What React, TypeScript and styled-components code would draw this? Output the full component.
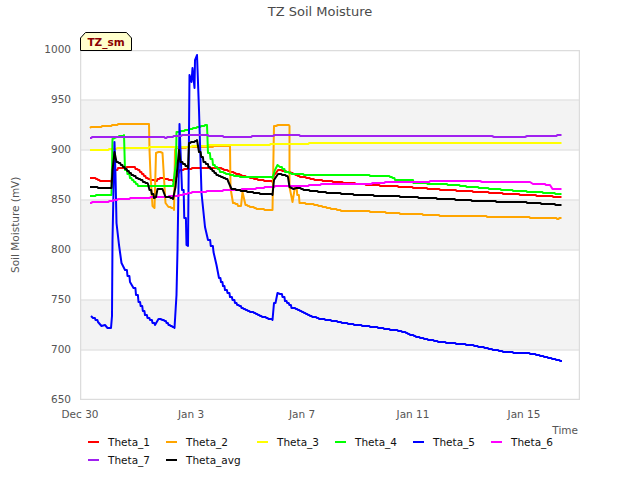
import React from "react";
import styled, { createGlobalStyle } from "styled-components";

type Pt = [number, number];

interface iSeries {
  name: string;
  color: string;
  points: Pt[];
}

// points are page pixels, the plot's viewBox starts at 80,50
const red: iSeries = {
  name: "Theta_1",
  color: "#ff0000",
  points: [
    [90, 177.5], [94, 178], [100, 181], [111.5, 181.5], [112.5, 172], [118, 168], [133, 167], [138, 170], [146, 178],
    [155, 181], [160, 177.5], [173, 181], [176, 178], [180, 170], [190, 168.5], [218, 167.5], [230, 171.5], [240, 175],
    [250, 177.5], [260, 180], [272.5, 181.5], [274, 175], [278, 170], [286.5, 171.5], [300, 176.5], [316.5, 180],
    [343, 182.5], [370, 185], [390, 186], [413, 187.5], [440, 189.5], [473, 191.5], [503, 193.5], [536.5, 195.5],
    [561.5, 197],
  ],
};

const orange: iSeries = {
  name: "Theta_2",
  color: "#ffa500",
  points: [
    [90, 128], [91, 127], [100, 126.5], [110, 125.5], [120, 124], [149, 124], [149.5, 150], [150.5, 175], [152.5, 206],
    [154.5, 208], [156, 153], [158.5, 151.5], [162.5, 152.5], [165.5, 203], [168.5, 207], [174, 209.5], [175, 150],
    [176, 148], [195, 147], [230, 146], [230.5, 188], [233, 203], [238, 205.5], [241, 205.5], [242.5, 192], [245.5, 205],
    [256.5, 209], [272.5, 210], [274, 126], [278, 125], [289.5, 125.5], [289.5, 187], [292.5, 202], [295, 187],
    [299.5, 203], [310, 204], [333, 209], [343, 211], [370, 211.5], [400, 213.5], [423, 214.5], [448, 216], [487, 216.5],
    [530, 217.5], [557, 218.5], [561.5, 217.5],
  ],
};

const yellow: iSeries = {
  name: "Theta_3",
  color: "#ffff00",
  points: [
    [90, 150], [105, 150], [115, 148.5], [147, 147.5], [190, 146.5], [217, 145], [250, 145], [307, 143.5], [370, 142.5],
    [561.5, 142.5],
  ],
};

const green: iSeries = {
  name: "Theta_4",
  color: "#00ff00",
  points: [
    [90, 196], [100, 195], [111.5, 194.5], [112.5, 138.5], [116.5, 137], [124, 135], [125, 170], [130, 178], [138, 185.5],
    [173, 186], [176, 163], [176.5, 132], [187, 129.5], [207, 125], [208, 153], [213, 165], [220, 171.5], [230, 175],
    [240, 176.5], [250, 177], [272.5, 177.5], [275, 170], [277.5, 165], [280, 166.5], [285, 171.5], [291.5, 173.5],
    [308, 175], [370, 175.5], [390, 176.5], [395, 180], [413, 180], [413.5, 183], [441.5, 184], [460, 185.5], [466.5, 186.5],
    [493, 189], [513, 190.5], [527, 191.5], [543, 192.5], [561.5, 194],
  ],
};

const blue: iSeries = {
  name: "Theta_5",
  color: "#0000ff",
  points: [
    [91, 316], [93, 318], [98, 322], [101.5, 326], [105, 325], [107.5, 327.5], [111, 328], [112, 316], [112.5, 240],
    [114.5, 142], [115.5, 175], [116.5, 223], [119, 245], [121.5, 263], [125, 270], [130, 281.5], [133.5, 288],
    [138.5, 301.5], [145, 315], [150, 320], [155, 325], [158.5, 319], [162.5, 319.5], [168.5, 325], [174.5, 327.5],
    [176.5, 295], [177.5, 250], [179.5, 124], [182, 190], [186.5, 245], [188, 246], [189.5, 75], [191.5, 82], [192.5, 68],
    [194.5, 88], [195, 60], [197, 55], [199, 110], [201.5, 193], [205, 226.5], [208, 240], [213.5, 251.5], [216.5, 265],
    [219, 278], [225, 290], [230, 296.5], [235, 303], [241.5, 308], [250, 311.5], [260, 316], [272.5, 320], [274, 303],
    [275.5, 302.5], [277.5, 292.5], [280, 293.5], [285, 300.5], [291.5, 307.5], [300, 310.5], [310, 316], [319, 318.5],
    [350, 324], [380, 328], [400, 331], [420, 338], [440, 342], [470, 345], [505, 352], [530, 353.5], [550, 358], [562, 361],
  ],
};

const magenta: iSeries = {
  name: "Theta_6",
  color: "#ff00ff",
  points: [
    [90, 202.5], [107, 201.5], [120, 199], [177, 196], [190, 192.5], [213, 191], [250, 189], [273, 186.5], [287, 185.5],
    [307, 185.5], [333, 183.5], [370, 183.5], [383, 182.5], [428, 181.5], [480, 181], [482, 182], [530, 181.5], [533, 183.5],
    [550, 185], [552.5, 188.5], [561.5, 189],
  ],
};

const purple: iSeries = {
  name: "Theta_7",
  color: "#a020f0",
  points: [
    [90, 137.5], [120, 136.5], [150, 137], [165, 137.5], [180, 135.5], [200, 135], [215, 136], [230, 137], [250, 136.5],
    [272, 135.5], [285, 134.5], [300, 135.5], [340, 136], [492, 136], [494, 136.5], [525, 136.5], [527, 135.5], [555, 135.5],
    [561.5, 135],
  ],
};

const avg: iSeries = {
  name: "Theta_avg",
  color: "#000000",
  points: [
    [90, 186.5], [100, 188], [111.5, 187.5], [112.5, 170], [114.5, 151.5], [116.5, 161.5], [123, 166.5], [131.5, 175],
    [143, 181.5], [148, 183.5], [149.5, 190], [154, 198], [156, 196.5], [157.5, 188.5], [162.5, 188.5], [165.5, 196.5],
    [173, 198.5], [175.5, 186.5], [179, 150], [180.5, 161.5], [188, 168], [189, 143], [197, 140], [199, 151.5], [203.5, 161.5],
    [208.5, 166.5], [216.5, 175], [228, 180.5], [231.5, 189], [243, 191], [260, 193.5], [272.5, 194.5], [274, 180], [278, 173.5],
    [288, 176.5], [289.5, 186.5], [293.5, 189], [296.5, 187.5], [303.5, 190], [326.5, 192.5], [360, 195], [400, 196.5],
    [437, 198.5], [480, 201], [527, 202.5], [561.5, 205],
  ],
};

const drawOrder = [red, orange, yellow, green, blue, purple, magenta, avg];
const legend = [red, orange, yellow, green, blue, magenta, purple, avg];
const yTicks = [1000, 950, 900, 850, 800, 750, 700, 650];
const xTicks = ["Dec 30", "Jan 3", "Jan 7", "Jan 11", "Jan 15"];
const bands = [100, 200, 300];
const gridLines = [100, 150, 200, 250, 300, 350];

// the readings are whole numbers, so the lines climb in small steps
const toSteps = (points: Pt[]) => {
  const out: Pt[] = [];
  points.forEach(([x, y], i) => {
    if (i === 0) {
      out.push([x, Math.round(y)]);
      return;
    }
    const [px, py] = points[i - 1];
    const n = Math.max(1, Math.floor((x - px) / 2));
    for (let k = 1; k <= n; k++) {
      const sx = px + ((x - px) * k) / n;
      const sy = Math.round(py + ((y - py) * k) / n);
      const last = out[out.length - 1];
      if (last[1] !== sy && x - px > 4) out.push([sx - 0.6, last[1]]);
      out.push([sx, sy]);
    }
  });
  return out.map((p) => p.join(",")).join(" ");
};

const App: React.FC = () => {
  return (
    <Page>
      <GlobalStyle />
      <Title>TZ Soil Moisture</Title>
      <PlotRow>
        <YLabel>Soil Moisture (mV)</YLabel>
        <YTickCol>
          {yTicks.map((t) => (
            <Tick key={t}>{t}</Tick>
          ))}
        </YTickCol>
        <PlotBox>
          <Tag>
            <TagShape viewBox="0 0 52 19">
              <path d="M0.5 18.5V6L5.5 0.5H46.5L51.5 6V18.5Z" fill="#ffffcc" stroke="#000" />
            </TagShape>
            <TagText>TZ_sm</TagText>
          </Tag>
          <svg width="500" height="350" viewBox="80 50 500 350">
            {bands.map((y) => (
              <rect key={y} x="80" y={y} width="500" height="50" fill="#f3f3f3" />
            ))}
            {gridLines.map((y) => (
              <line key={y} x1="80" x2="580" y1={y} y2={y} stroke="#e4e4e4" strokeWidth="1.5" />
            ))}
            <rect x="80.5" y="50.5" width="499" height="349" fill="none" stroke="#dcdcdc" strokeWidth="1.5" />
            {drawOrder.map((s) => (
              <polyline
                key={s.name}
                points={toSteps(s.points)}
                fill="none"
                stroke={s.color}
                strokeWidth="2"
                strokeLinejoin="round"
              />
            ))}
          </svg>
        </PlotBox>
      </PlotRow>
      <XTicks>
        {xTicks.map((t) => (
          <XTick key={t}>{t}</XTick>
        ))}
      </XTicks>
      <TimeLabel>Time</TimeLabel>
      <Legend>
        {legend.map((s) => (
          <LegendItem key={s.name}>
            <Swatch $color={s.color} />
            <LegendText>{s.name}</LegendText>
          </LegendItem>
        ))}
      </Legend>
    </Page>
  );
};

export default App;

const GlobalStyle = createGlobalStyle`
  html, body {
    margin: 0;
    padding: 0;
    background: #fff;
  }
`;

const Page = styled.div`
  width: 640px;
  height: 480px;
  overflow: hidden;
  display: flex;
  flex-direction: column;
  font-family: "DejaVu Sans", sans-serif;
  font-size: 10.5px;
  color: #555;
`;

const Title = styled.div`
  height: 50px;
  padding-top: 4px;
  box-sizing: border-box;
  text-align: center;
  font-size: 13px;
  line-height: 16px;
  color: #4a4a4a;
`;

const PlotRow = styled.div`
  display: flex;
  height: 350px;
`;

const YLabel = styled.div`
  width: 30px;
  display: flex;
  align-items: center;
  justify-content: center;
  writing-mode: vertical-rl;
  transform: rotate(180deg);
`;

const YTickCol = styled.div`
  width: 41px;
  height: 362px;
  margin-top: -7px;
  display: flex;
  flex-direction: column;
  justify-content: space-between;
  align-items: flex-end;
`;

const Tick = styled.div`
  height: 12px;
  line-height: 12px;
`;

const PlotBox = styled.div`
  position: relative;
  margin-left: 9px;
  width: 500px;
  height: 350px;
  svg {
    display: block;
  }
`;

const Tag = styled.div`
  position: absolute;
  left: 0;
  top: -18px;
  width: 52px;
  height: 19px;
  display: flex;
  align-items: center;
  justify-content: center;
`;

const TagShape = styled.svg`
  position: absolute;
  left: 0;
  top: 0;
  width: 52px;
  height: 19px;
`;

const TagText = styled.span`
  position: relative;
  font-size: 10.5px;
  font-weight: bold;
  color: #8b0000;
`;

const XTicks = styled.div`
  display: flex;
  margin-left: 24.5px;
  padding-top: 8px;
  height: 15px;
`;

const XTick = styled.div`
  width: 111px;
  text-align: center;
  line-height: 13px;
`;

const TimeLabel = styled.div`
  height: 10px;
  padding-right: 62px;
  text-align: right;
  line-height: 15px;
`;

const Legend = styled.div`
  display: grid;
  grid-template-columns: 78px 91px 78px 78px 78px 78px;
  grid-auto-rows: 18px;
  margin-left: 88px;
`;

const LegendItem = styled.div`
  display: flex;
  align-items: center;
`;

const Swatch = styled.span<{ $color: string }>`
  width: 11px;
  height: 2px;
  margin-right: 9px;
  background: ${({ $color }) => $color};
`;

const LegendText = styled.span`
  color: #111;
`;
